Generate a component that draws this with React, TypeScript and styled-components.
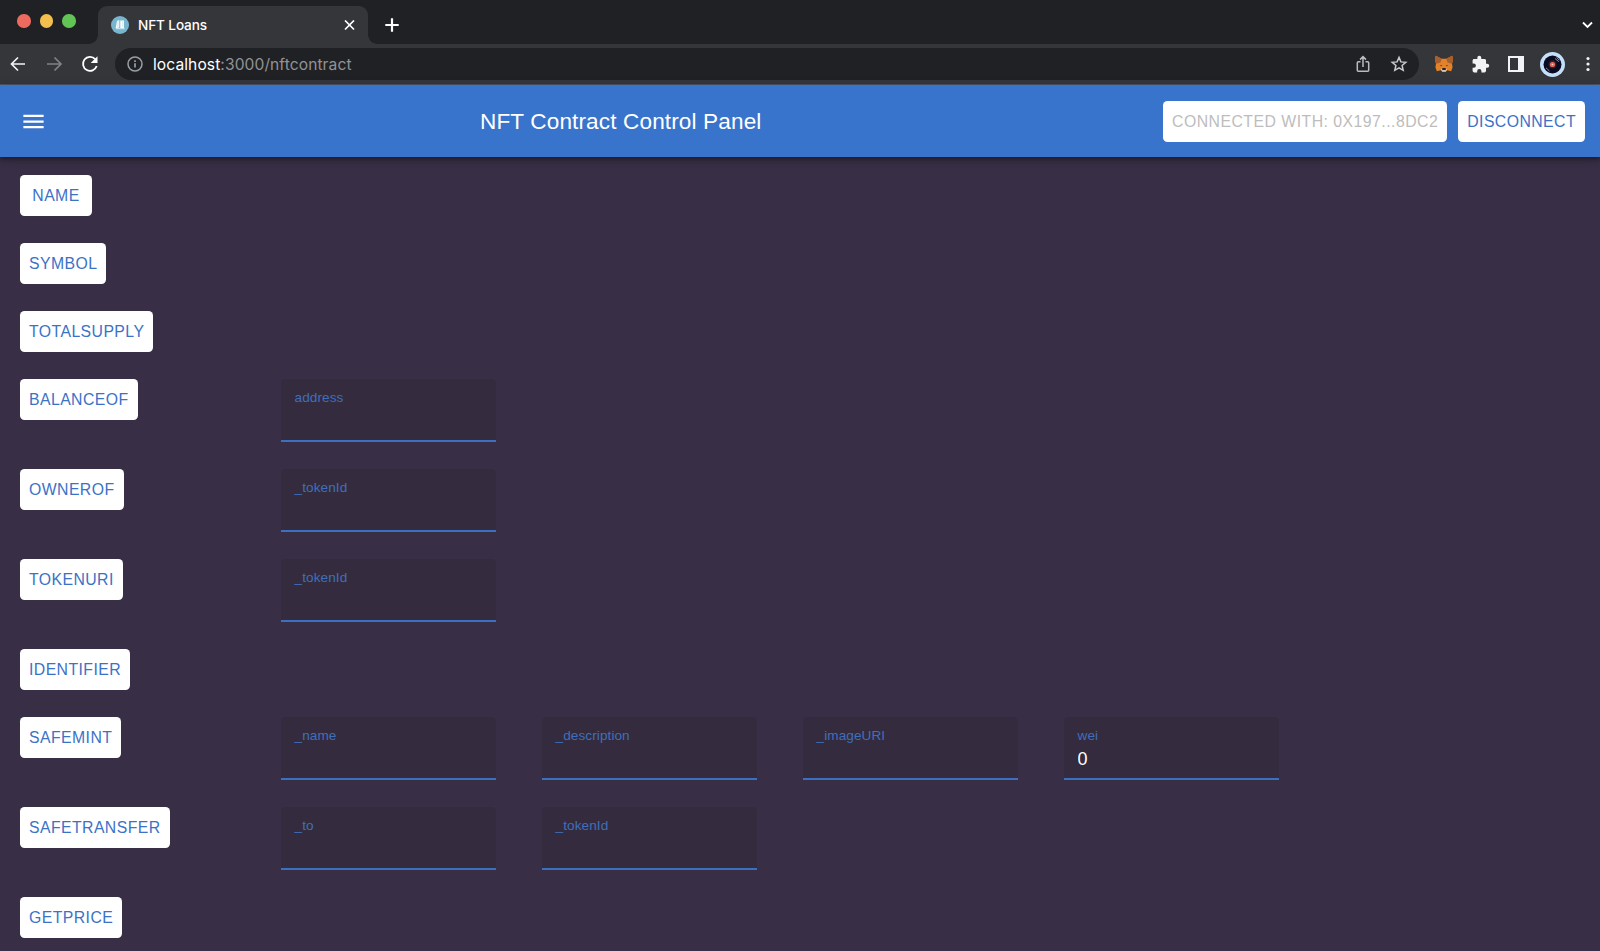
import React from "react";
import styled, { createGlobalStyle } from "styled-components";

const Global = createGlobalStyle`
  * { box-sizing: border-box; }
  html, body { margin: 0; padding: 0; background: #382f46; overflow: hidden; }
  button, input { font-family: inherit; border: 0; margin: 0; }
  svg { display: block; flex: none; }
`;

const sans = `"Liberation Sans", Arial, sans-serif`;

const Window = styled.div`
  display: flex;
  flex-direction: column;
  width: 1600px;
  height: 951px;
  overflow: hidden;
  background: #382f46;
  font-family: ${sans};
`;

const TabStrip = styled.div`
  display: flex;
  height: 44px;
  background: #202124;
`;

const TrafficLights = styled.div`
  display: flex;
  gap: 9px;
  width: 98px;
  padding: 14px 0 0 17px;
`;

const Light = styled.span<{ $color: string }>`
  width: 13.5px;
  height: 13.5px;
  border-radius: 50%;
  background: ${(p) => p.$color};
`;

const Tab = styled.div`
  position: relative;
  display: flex;
  align-items: center;
  width: 270px;
  height: 38px;
  margin-top: 6px;
  padding: 0 13px;
  border-radius: 9px 9px 0 0;
  background: #35363a;
  color: #fff;
  &::before,
  &::after {
    content: "";
    position: absolute;
    bottom: 0;
    width: 9px;
    height: 9px;
  }
  &::before {
    left: -9px;
    background: radial-gradient(circle at 0 0, transparent 8.5px, #35363a 9px);
  }
  &::after {
    right: -9px;
    background: radial-gradient(circle at 100% 0, transparent 8.5px, #35363a 9px);
  }
`;

const TabTitle = styled.span`
  flex: 1;
  margin-left: 9px;
  padding-bottom: 1px;
  font: 500 13.6px/20px Inter, sans-serif;
  letter-spacing: -0.12px;
`;

const NewTab = styled.span`
  margin: 18px 0 0 17px;
`;

const TabSearch = styled.span`
  margin: 20px 7px 0 auto;
`;

const AddressBar = styled.div`
  display: flex;
  align-items: center;
  height: 41px;
  overflow: hidden;
  background: #35363a;
  border-bottom: 1px solid #4b5366;
`;

const NavIcons = styled.div`
  display: flex;
  flex: none;
  align-items: center;
  gap: 14px;
  width: 115px;
  padding-left: 7px;
`;

const Omnibox = styled.div`
  display: flex;
  flex: none;
  align-items: center;
  width: 1304px;
  height: 32px;
  padding: 0 11px 0 12px;
  border-radius: 16px;
  background: #202124;
`;

const Url = styled.span`
  flex: 1;
  margin-left: 10px;
  padding-top: 2px;
  font: 400 15.6px/24px Inter, sans-serif;
  letter-spacing: 0.08px;
  color: #919396;
  b {
    font-weight: 400;
    color: #fff;
  }
`;

const OmniActions = styled.div`
  display: flex;
  align-items: center;
  gap: 18px;
`;

const Extensions = styled.div`
  display: grid;
  flex: none;
  grid-template-columns: repeat(5, 36px);
  align-items: center;
  justify-items: center;
  margin-left: 7px;
`;

const AppBar = styled.header`
  position: relative;
  display: flex;
  align-items: center;
  height: 72px;
  padding: 0 15px 0 20px;
  background: #3873cc;
  color: #fff;
  box-shadow: 0 2px 4px -1px rgba(0, 0, 0, 0.3), 0 4px 5px rgba(0, 0, 0, 0.16),
    0 1px 11px rgba(0, 0, 0, 0.14);
`;

const Title = styled.h1`
  flex: 1;
  margin: 0 0 0 433px;
  padding-top: 2px;
  font-size: 22.6px;
  font-weight: 400;
  line-height: 36px;
  letter-spacing: 0.12px;
`;

const Account = styled.div`
  display: flex;
  gap: 11px;
`;

const Button = styled.button<{ $muted?: boolean }>`
  flex: none;
  min-width: 72px;
  height: 41px;
  padding: 0 9px;
  border-radius: 4.5px;
  background: #fff;
  color: ${(p) => (p.$muted ? "#bdbdbd" : "#3b72c6")};
  font-size: 15.8px;
  line-height: 41px;
  letter-spacing: ${(p) => (p.$muted ? "0.48px" : "0.43px")};
  text-transform: uppercase;
  white-space: nowrap;
`;

const Panel = styled.main`
  display: flex;
  flex-direction: column;
  gap: 27px;
  padding: 18px 20px 0;
`;

const MethodRow = styled.section`
  display: grid;
  grid-template-columns: repeat(5, 215px);
  column-gap: 46px;
  align-items: start;
  justify-items: start;
`;

const Field = styled.label`
  display: flex;
  flex-direction: column;
  width: 215px;
  height: 63px;
  padding: 9px 13.5px 0;
  border-bottom: 2px solid #3b70c0;
  border-radius: 4.5px 4.5px 0 0;
  background: #342b3f;
`;

const FieldLabel = styled.span`
  color: #3f6fba;
  font-size: 13.6px;
  line-height: 19px;
  letter-spacing: 0.08px;
`;

const FieldInput = styled.input`
  width: 100%;
  height: 28px;
  padding: 0;
  background: none;
  color: #fff;
  font-size: 18px;
  outline: none;
`;

type Param = { label: string; value?: string };

const methods: { name: string; params: Param[] }[] = [
  { name: "name", params: [] },
  { name: "symbol", params: [] },
  { name: "totalSupply", params: [] },
  { name: "balanceOf", params: [{ label: "address" }] },
  { name: "ownerOf", params: [{ label: "_tokenId" }] },
  { name: "tokenURI", params: [{ label: "_tokenId" }] },
  { name: "identifier", params: [] },
  {
    name: "safeMint",
    params: [{ label: "_name" }, { label: "_description" }, { label: "_imageURI" }, { label: "wei", value: "0" }],
  },
  { name: "safeTransfer", params: [{ label: "_to" }, { label: "_tokenId" }] },
  { name: "getPrice", params: [] },
];

const Favicon = () => (
  <svg width="18" height="18" viewBox="0 0 18 18">
    <circle cx="9" cy="9" r="9" fill="#78b6d0" />
    <path d="M6 4.8 8.300 4.300v7.300l-3.600.7zM9.300 4.500h3.700v7.500H9.300z" fill="#fff" />
    <path d="M5 12.700h8.600" stroke="#d6edf5" fill="none" />
    <path d="M6.900 5v6M11.800 4.800v6" stroke="#a9d3e3" strokeWidth=".6" />
  </svg>
);

const BackArrow = ({ color, flip }: { color: string; flip?: boolean }) => (
  <svg width="22" height="22" viewBox="0 0 22 22" fill="none" stroke={color} strokeWidth="1.7">
    <path d={flip ? "M4 11h14M11.5 4.5 18 11l-6.500 6.500" : "M18 11H4.500M11 4.500 4.500 11l6.500 6.500"} />
  </svg>
);

const Reload = () => (
  <svg width="22" height="22" viewBox="0 0 22 22">
    <path d="M16.200 6.100A7 7 0 1 0 17.700 13" fill="none" stroke="#fff" strokeWidth="1.800" />
    <path d="M18.500 3.200V10h-6.800z" fill="#fff" />
  </svg>
);

const Info = () => (
  <svg width="16" height="16" viewBox="0 0 16 16" fill="none" stroke="#9aa0a6" strokeWidth="1.500">
    <circle cx="8" cy="8" r="7" />
    <path d="M8 7.200v4.300M8 4.200v1.700" strokeWidth="1.700" />
  </svg>
);

const Share = () => (
  <svg width="18" height="18" viewBox="0 0 18 18" fill="none" stroke="#b9bcbf" strokeWidth="1.500">
    <path d="M6.500 6.800H4.300q-1 0-1 1v7.400q0 1 1 1h9.400q1 0 1-1V7.800q0-1-1-1h-2.200M9 12V1.800M6 4.600l3-3 3 3" />
  </svg>
);

const Star = () => (
  <svg width="18" height="18" viewBox="0 0 18 18" fill="none" stroke="#c8cacd" strokeWidth="1.500">
    <path d="m9 2.400 1.900 4.500 4.900.4-3.700 3.200 1.100 4.800L9 12.800l-4.200 2.500 1.100-4.800-3.700-3.200 4.900-.4z" />
  </svg>
);

const Fox = () => (
  <svg width="18" height="18" viewBox="0 0 18 18">
    <path d="M.7.800 6.700 3.700h4.600L17.300.8l.7 4-1 4 .6 3.500-1.400 4-4-1-1.500 1.400H7.300l-1.500-1.400-4 1-1.400-4L1 8.800l-1-4z" fill="#e2822b" />
    <path d="M.7.800 6.700 3.700 5.500 7.500 1 8.800l-1-4zM17.300.8l-6 2.900 1.200 3.800L17 8.800l1-4z" fill="#a95f2c" />
    <path d="m4.600 9.900 2.300.2-.3 1.100zM13.400 9.900l-2.300.2.3 1.100z" fill="#4a3a30" />
    <path d="m5.800 14.100 1.500-.5h3.400l1.500.5-1.500 2.600H7.300z" fill="#d7c4b4" />
    <path d="m7 13.800.5-.8h3l.5.800-.4 1.200H7.400z" fill="#24262a" />
  </svg>
);

const Puzzle = () => (
  <svg width="19" height="19" viewBox="0 0 24 24" fill="#f1f3f4">
    <path d="M20.500 11H19V7c0-1.100-.9-2-2-2h-4V3.500a2.500 2.500 0 0 0-5 0V5H4c-1.100 0-2 .9-2 2v3.800h1.500a2.700 2.700 0 0 1 0 5.400H2V20c0 1.100.9 2 2 2h3.800v-1.500a2.700 2.700 0 0 1 5.400 0V22H17c1.100 0 2-.9 2-2v-4h1.500a2.500 2.500 0 0 0 0-5z" />
  </svg>
);

const SidePanel = () => (
  <svg width="16" height="16" viewBox="0 0 16 16">
    <path d="M0 0h16v16H0zM2 2v12h8V2z" fill="#f1f3f4" fillRule="evenodd" />
  </svg>
);

const Avatar = () => (
  <svg width="25" height="25" viewBox="0 0 25 25">
    <circle cx="12.500" cy="12.500" r="12.500" fill="#c3dffa" />
    <circle cx="12.500" cy="12.500" r="9" fill="#090a20" />
    <path d="m15 6.500 3.800 3.200M16.500 5.500l2.800 2.700M6 15.800l3.500 3.300" stroke="#8791a5" strokeWidth="1" fill="none" />
    <circle cx="12.500" cy="12.500" r="4" fill="#33202f" />
    <circle cx="12.500" cy="12.500" r="2.600" fill="#ec654f" />
    <circle cx="12.500" cy="12.500" r=".8" fill="#ffd4c8" />
  </svg>
);

const More = () => (
  <svg width="4" height="16" viewBox="0 0 4 16" fill="#f1f3f4">
    <circle cx="2" cy="2.500" r="1.600" />
    <circle cx="2" cy="8" r="1.600" />
    <circle cx="2" cy="13.500" r="1.600" />
  </svg>
);

const MenuIcon = () => (
  <svg width="27" height="27" viewBox="0 0 24 24" fill="#fff">
    <path d="M3 18h18v-2H3v2zm0-5h18v-2H3v2zm0-7v2h18V6H3z" />
  </svg>
);

export default function App() {
  return (
    <Window>
      <Global />
      <TabStrip>
        <TrafficLights>
          <Light $color="#ed6a5e" />
          <Light $color="#f5bf4f" />
          <Light $color="#61c454" />
        </TrafficLights>
        <Tab>
          <Favicon />
          <TabTitle>NFT Loans</TabTitle>
          <svg width="11" height="11" viewBox="0 0 11 11" stroke="#fff" strokeWidth="1.700">
            <path d="m1 .5 9 9m0-9-9 9" />
          </svg>
        </Tab>
        <NewTab>
          <svg width="14" height="14" viewBox="0 0 14 14" stroke="#fff" strokeWidth="2.200">
            <path d="M7 .3v13.400M.3 7h13.400" />
          </svg>
        </NewTab>
        <TabSearch>
          <svg width="11" height="10" viewBox="0 0 11 10" fill="none" stroke="#fff" strokeWidth="1.800">
            <path d="m1 2.500 4.500 4.500L10 2.500" />
          </svg>
        </TabSearch>
      </TabStrip>
      <AddressBar>
        <NavIcons>
          <BackArrow color="#f1f3f4" />
          <BackArrow color="#808285" flip />
          <Reload />
        </NavIcons>
        <Omnibox>
          <Info />
          <Url>
            <b>localhost</b>:3000/nftcontract
          </Url>
          <OmniActions>
            <Share />
            <Star />
          </OmniActions>
        </Omnibox>
        <Extensions>
          <Fox />
          <Puzzle />
          <SidePanel />
          <Avatar />
          <More />
        </Extensions>
      </AddressBar>
      <AppBar>
        <MenuIcon />
        <Title>NFT Contract Control Panel</Title>
        <Account>
          <Button $muted disabled>
            Connected with: 0x197...8Dc2
          </Button>
          <Button>Disconnect</Button>
        </Account>
      </AppBar>
      <Panel>
        {methods.map((method) => (
          <MethodRow key={method.name}>
            <Button>{method.name}</Button>
            {method.params.map((param) => (
              <Field key={param.label}>
                <FieldLabel>{param.label}</FieldLabel>
                <FieldInput defaultValue={param.value} />
              </Field>
            ))}
          </MethodRow>
        ))}
      </Panel>
    </Window>
  );
}
